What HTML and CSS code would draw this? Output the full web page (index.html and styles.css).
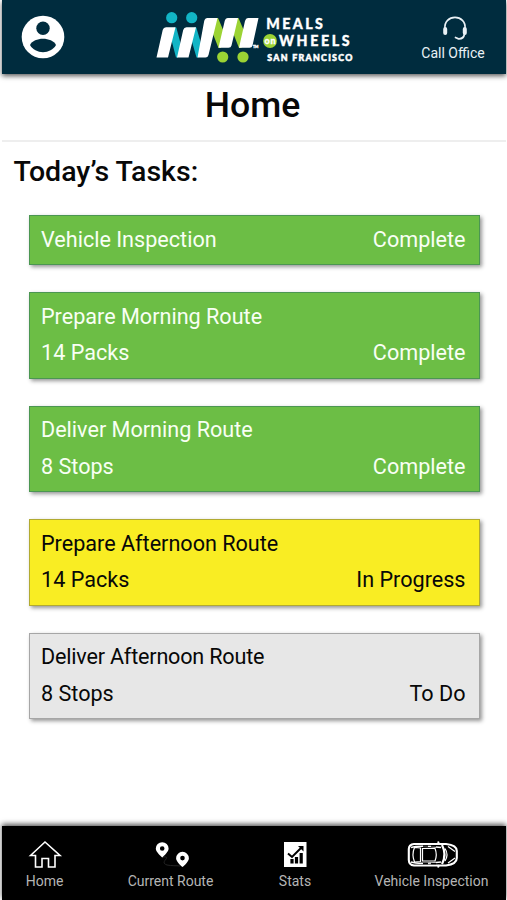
FILE: index.html
```html
<!DOCTYPE html>
<html lang="en">
<head>
<meta charset="utf-8">
<title>Home</title>
<link rel="stylesheet" href="styles.css">
</head>
<body>
<div class="app">
  <header class="topbar">
    <svg class="avatar" viewBox="0 0 44 44"><circle cx="22" cy="22" r="21.3" fill="#fff"/><circle cx="22" cy="13.3" r="6.7" fill="#002c3e"/><path d="M9 30C13 21.600 31 21.600 35 30C30 39.500 14 39.500 9 30Z" fill="#002c3e"/></svg>
    <svg class="logo" viewBox="154 8 202 58">
      <g fill="#12b5c6"><circle cx="171.700" cy="17.700" r="5.600"/><circle cx="191.700" cy="17.700" r="5.600"/><path d="M174 27.500L176.300 27.500L181 45L178 57.500L176 57.500L171.500 40ZM194 27.500L196.300 27.500L201.500 45L198.500 57.500L196.500 57.500L191.500 40Z"/></g>
      <g fill="#9bd334"><circle cx="222.700" cy="57" r="5.600"/><circle cx="243" cy="57" r="5.600"/><path d="M216 18H218L224 32L221 48H218.500L213 34ZM236.500 18H238.500L244.500 32L241.500 48H239L233.500 34Z"/></g>
      <g fill="#fff"><path d="M166 27.200H175.500L168 57.500H156.500L162.700 30Q163.500 27.200 166 27.200ZM186.500 27.200H196L188.500 57.500H177L183.200 30Q184 27.200 186.500 27.200ZM207.500 18H217.500L208.500 55Q207.800 57.500 205.500 57.500H197.500L204.200 21Q205 18 207.500 18ZM228 18H238L231.500 45.500Q231 47.800 228.500 47.800H218.500L224.700 21Q225.500 18 228 18ZM248 18H258.500L252.500 45.500Q252 47.800 249.500 47.800H239L245 21Q245.800 18 248 18Z"/></g>
      <circle cx="270" cy="41" r="6.900" fill="#9bd334"/>
      <g class="logo-text"><text x="266.300" y="29.300" font-size="14.200" textLength="56.500">MEALS</text><text x="279" y="46" font-size="14.200" textLength="70.500">WHEELS</text><text class="city" x="267.300" y="60.500" font-size="8.800" textLength="85">SAN FRANCISCO</text><text x="264.500" y="43.500" font-size="9" textLength="11">on</text><text x="253" y="47.800" font-size="3.500">TM</text></g>
    </svg>
    <div class="call">
      <svg viewBox="0 0 28 26" fill="none" stroke="#e9f1f5"><path d="M4 14C2 -1.500 26 -1.500 24 14" stroke-width="1.700"/><path d="M4.200 14V18M23.800 14V18" stroke-width="4" stroke-linecap="round"/><path d="M23.500 19C23 22 21 24 17.500 23.800L14.500 22.500" stroke-width="1.700" stroke-linecap="round"/></svg>
      <span>Call Office</span>
    </div>
  </header>
  <h1>Home</h1>
  <main>
    <h2>Today’s Tasks:</h2>
    <div class="tasks">
      <section class="task short done"><div class="row"><span>Vehicle Inspection</span><span>Complete</span></div></section>
      <section class="task done"><div class="row">Prepare Morning Route</div><div class="row"><span>14 Packs</span><span>Complete</span></div></section>
      <section class="task done"><div class="row">Deliver Morning Route</div><div class="row"><span>8 Stops</span><span>Complete</span></div></section>
      <section class="task progress"><div class="row">Prepare Afternoon Route</div><div class="row"><span>14 Packs</span><span>In Progress</span></div></section>
      <section class="task todo"><div class="row tight">Deliver Afternoon Route</div><div class="row"><span>8 Stops</span><span>To Do</span></div></section>
    </div>
  </main>
  <nav>
    <a class="tab home"><svg viewBox="0 0 34 28" fill="none" stroke="#fff" stroke-width="1.600"><path d="M2.500 15.500L17 2L32 15.500H27V27H20.500V18.500H14V27H7.500V15.500Z"/></svg><span>Home</span></a>
    <a class="tab route"><svg viewBox="0 0 34 28"><path d="M8 17C20 16 4 22 13 25C18 26 22 25.500 26 26" fill="none" stroke="#242424"/><path fill="#fff" fill-rule="evenodd" d="M8.200 2.200A6.400 6.400 0 0 1 14.600 8.600C14.600 11.600 10.700 15.500 8.200 17.500C5.700 15.500 1.800 11.600 1.800 8.600A6.400 6.400 0 0 1 8.200 2.200ZM8.200 6.200A2.300 2.300 0 1 0 8.200 10.800A2.300 2.300 0 1 0 8.200 6.200ZM28.500 11.800A6.400 6.400 0 0 1 34.900 18.200C34.900 21.200 31 25.100 28.500 27.100C26 25.100 22.100 21.200 22.100 18.200A6.400 6.400 0 0 1 28.500 11.800ZM28.500 15.800A2.300 2.300 0 1 0 28.500 20.400A2.300 2.300 0 1 0 28.500 15.800Z"/></svg><span>Current Route</span></a>
    <a class="tab stats"><svg viewBox="0 0 24 28"><path d="M1 2H23.500V27H1Z" fill="#fff"/><path d="M9 23.500V19M13.500 23.500V17M18.200 23.500V13" stroke="#000" stroke-width="3.200"/><path d="M5 13.500L9 17L18 8" fill="none" stroke="#000" stroke-width="2"/><path d="M15 6H20.500V11.500Z"/></svg><span>Stats</span></a>
    <a class="tab vehicle"><svg viewBox="0 0 52 28" fill="none" stroke="#fff"><path d="M7 4Q2 4.500 1.800 9V20Q2 25 7 25.500H39Q49.800 24 49.800 18V11Q49.800 5 39 4Z" stroke-width="2.100"/><path d="M4 7.500Q12 5 34 7.500M4 22Q12 24.500 34 22" stroke-width="1.500"/><path d="M7.500 7.500Q4.500 14.500 7.500 22L13.500 21.500V8ZM15.500 8.500H28Q30.500 14.500 28 21H15.500ZM38 8.500Q42 14.500 38 21M41 6.500L48 11.500M41 23L48 18" stroke-width="1.200"/><path d="M35 5Q40 14.500 35 24" stroke-width="2.200"/><path d="M32 4L31 1.500M32 25L31 27.500" stroke-width="2"/><path d="M16 6H21M24 6H29M16 23.500H21M24 23.500H29" stroke="#000" stroke-width="1.600"/></svg><span>Vehicle Inspection</span></a>
  </nav>
</div>
</body>
</html>
```

FILE: styles.css
```css
* { box-sizing: border-box; }
body { margin: 0; background: #fff; font-family: Roboto, "Liberation Sans", sans-serif; color: #080808; }
.app { height: 900px; padding: 0 1px 0 2px; display: flex; flex-direction: column; overflow: hidden; }
.topbar { height: 74px; flex: none; background: #002c3e; box-shadow: 0 2px 5px rgba(0, 0, 0, .65); display: flex; align-items: flex-start; }
.avatar { width: 44px; height: 44px; margin: 15px 0 0 19px; }
.logo { width: 202px; height: 58px; margin: 8px 0 0 89px; }
.logo-text { fill: #fff; font-family: Lato, sans-serif; font-weight: 900; stroke: #fff; stroke-width: .35px; }
.city { stroke-width: .5px; }
.call { width: 80px; margin: 15px 0 0 57px; display: flex; flex-direction: column; align-items: center; color: #e9f1f5; font-size: 14px; line-height: 18px; }
.call svg { width: 28px; height: 26px; margin: 0 0 3px 3px; }
.call span { white-space: nowrap; }
h1 { margin: 0; padding: 1px 3px 0 0; flex: none; height: 68px; border-bottom: 2px solid #eee; font-size: 35.6px; line-height: 61px; font-weight: 500; text-align: center; }
main { flex: 1; }
h2 { margin: 10px 0 0 11.5px; font-size: 28.5px; line-height: 40px; font-weight: 500; }
.tasks { margin: 23px 26px 0 27px; display: flex; flex-direction: column; gap: 27px; }
.task { height: 86.6px; padding: 5.5px 13.5px 0 11px; border: 1px solid rgba(70, 70, 70, .4); box-shadow: 2px 2px 4px rgba(0, 0, 0, .42); font-size: 21.6px; line-height: 36.5px; }
.short { height: 50px; }
.row { display: flex; justify-content: space-between; }
.tight { letter-spacing: -.2px; }
.done { background: #6cbe45; color: #f8fff4; border-color: #4b9652; }
.progress { background: #f9ed23; }
.todo { background: #e7e7e7; }
nav { height: 74px; flex: none; background: #000; box-shadow: 0 -2px 5px rgba(0, 0, 0, .65); display: flex; }
.tab { flex: none; display: flex; flex-direction: column; align-items: center; padding-top: 14px; color: #b5b5b5; font-size: 14px; line-height: 18px; white-space: nowrap; }
.tab svg { height: 28px; margin-bottom: 4px; overflow: visible; }
.home { width: 85px; }
.route { width: 167px; }
.stats { width: 82px; }
.vehicle { width: 170px; padding-left: 21px; }
.vehicle svg { margin-left: 3px; }
```
